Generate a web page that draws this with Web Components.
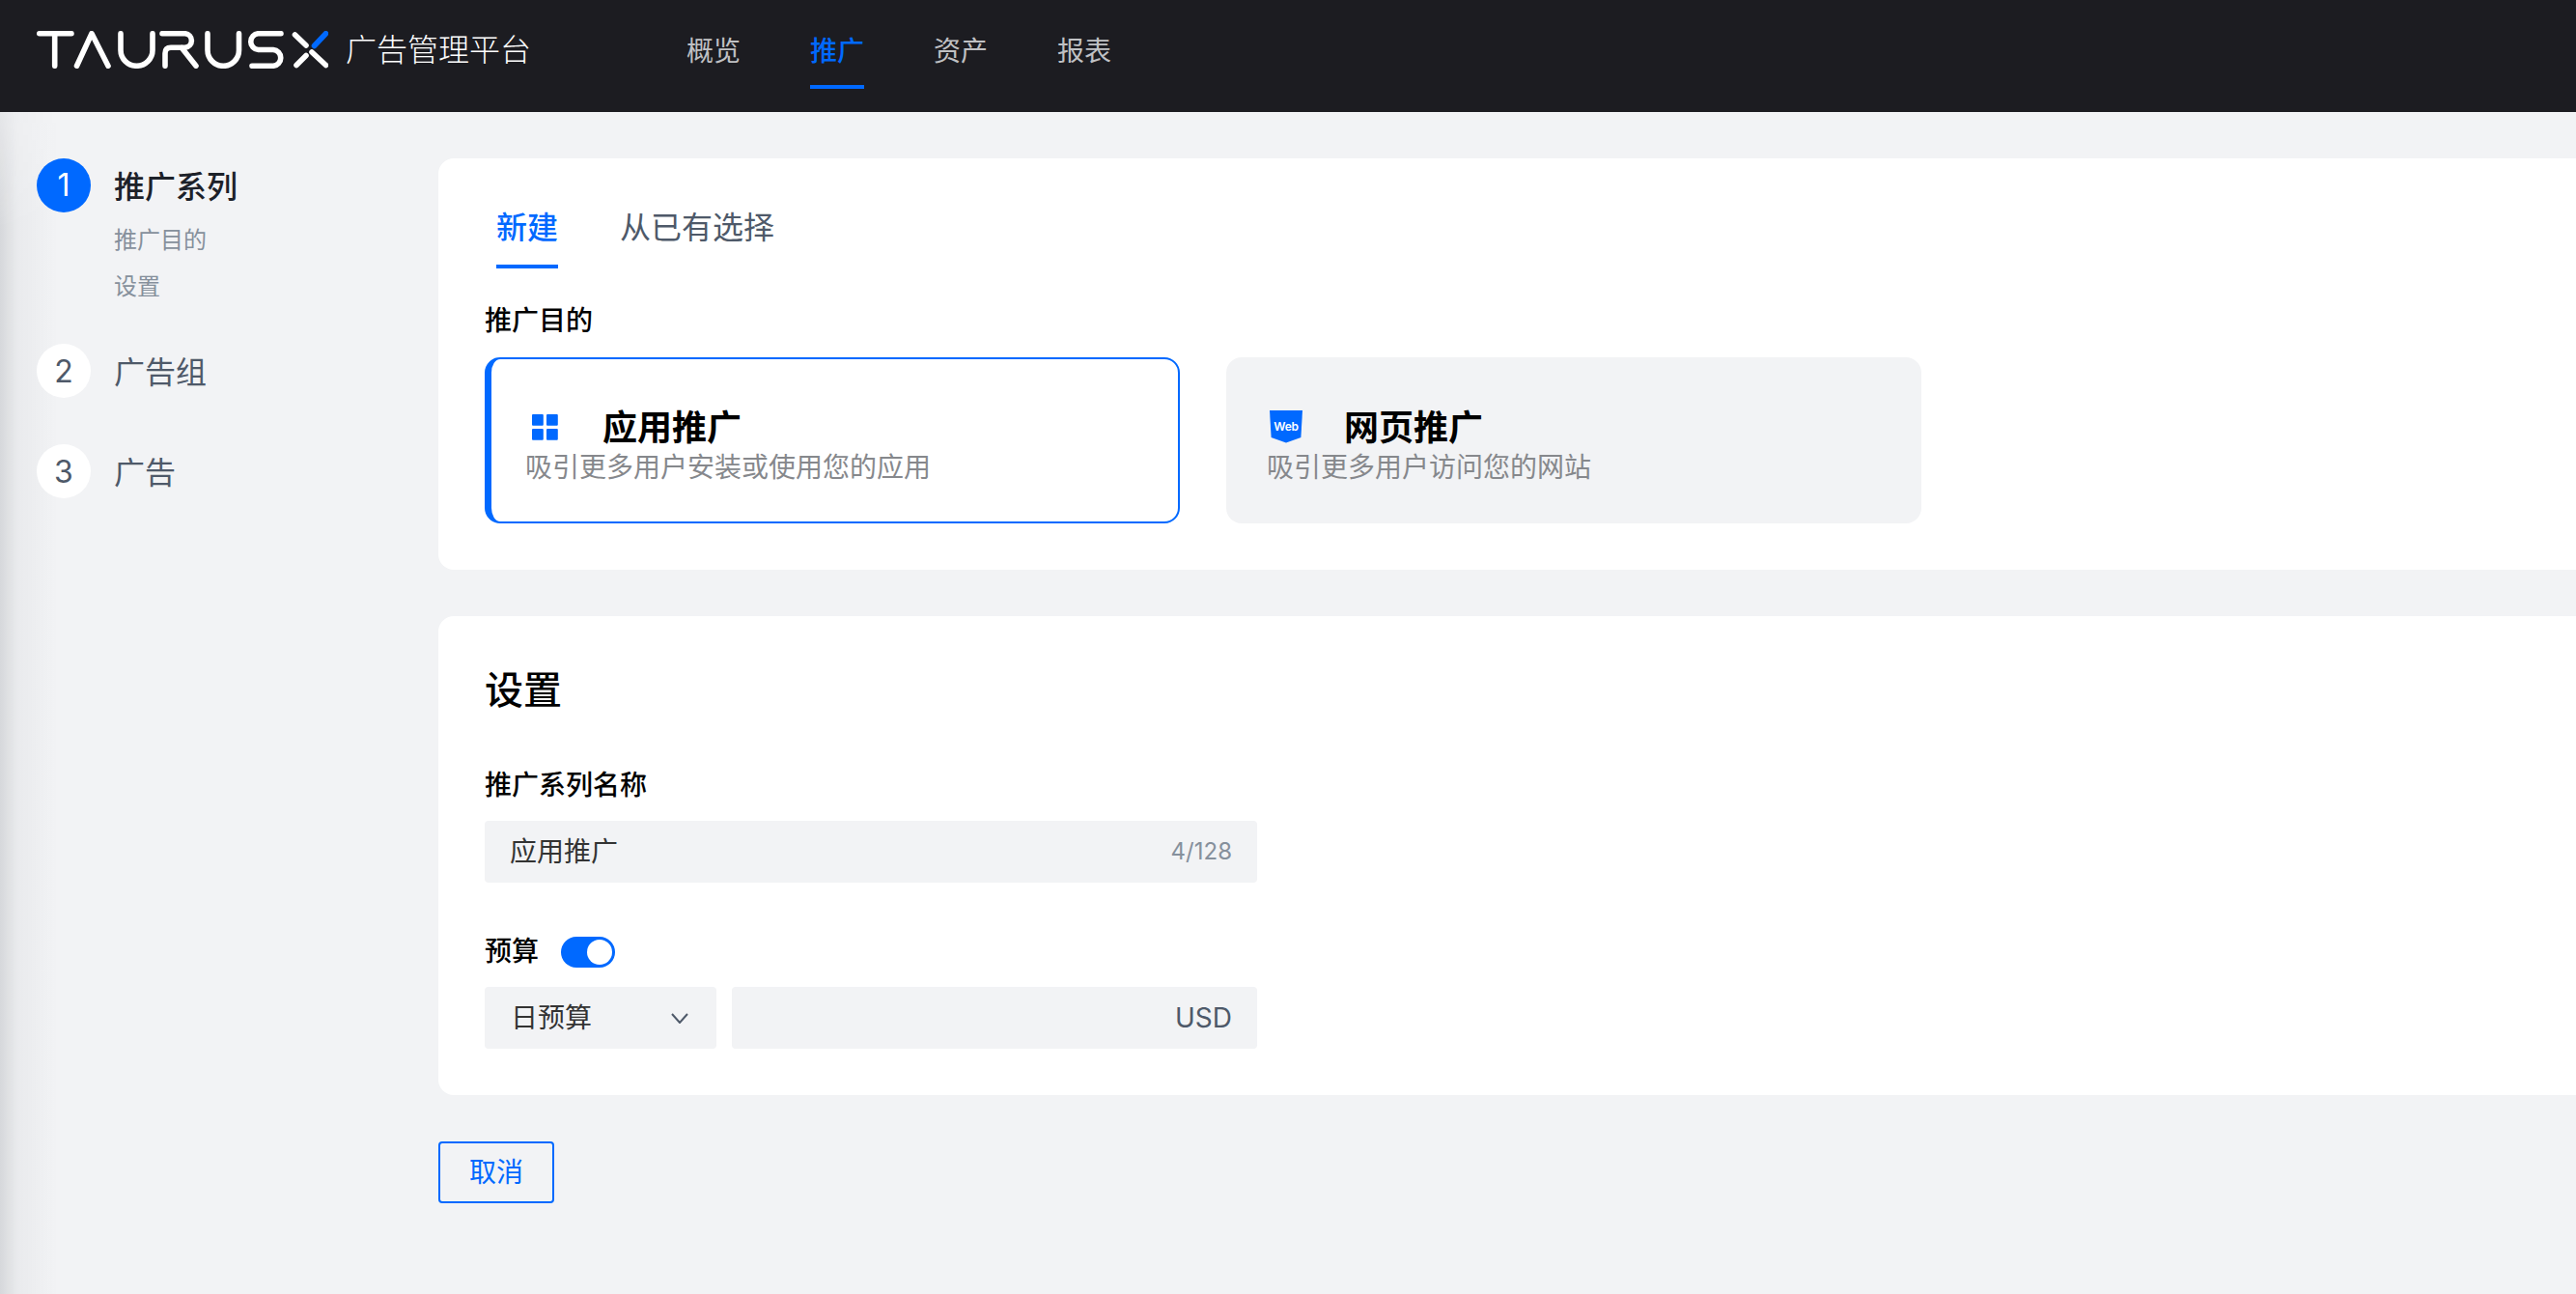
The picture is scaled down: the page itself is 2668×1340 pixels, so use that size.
<!DOCTYPE html>
<html lang="zh-CN">
<head>
<meta charset="utf-8">
<title>广告管理平台</title>
<style>
  html, body { margin: 0; height: 100%; }
  body { background: #f2f3f5; overflow: hidden; font-family: Inter, "Noto Sans CJK SC", sans-serif; }
</style>
</head>
<body>
<tx-app>
  <tx-header slot="header">
    <tx-logo slot="logo"></tx-logo>
    <tx-nav-item>概览</tx-nav-item>
    <tx-nav-item active>推广</tx-nav-item>
    <tx-nav-item>资产</tx-nav-item>
    <tx-nav-item>报表</tx-nav-item>
  </tx-header>
  <tx-sidebar slot="side">
    <tx-step num="1" active>推广系列
      <span slot="sub">推广目的</span>
      <span slot="sub">设置</span>
    </tx-step>
    <tx-step num="2">广告组</tx-step>
    <tx-step num="3">广告</tx-step>
  </tx-sidebar>
  <tx-panel>
    <tx-tabs>
      <tx-tab active>新建</tx-tab>
      <tx-tab>从已有选择</tx-tab>
    </tx-tabs>
    <tx-label class="goal">推广目的</tx-label>
    <tx-cards>
      <tx-promo active heading="应用推广" desc="吸引更多用户安装或使用您的应用">
        <tx-icon-grid slot="icon"></tx-icon-grid>
      </tx-promo>
      <tx-promo heading="网页推广" desc="吸引更多用户访问您的网站">
        <tx-icon-web slot="icon"></tx-icon-web>
      </tx-promo>
    </tx-cards>
  </tx-panel>
  <tx-panel>
    <tx-title>设置</tx-title>
    <tx-label class="name">推广系列名称</tx-label>
    <tx-input value="应用推广" suffix="4/128"></tx-input>
    <tx-budget></tx-budget>
  </tx-panel>
  <tx-button>取消</tx-button>
</tx-app>

<script>
const BLUE = '#0069ff';
function def(name, css, html, setup) {
  customElements.define(name, class extends HTMLElement {
    constructor() {
      super();
      const root = this.attachShadow({ mode: 'open' });
      const t = document.createElement('template');
      t.innerHTML = `<style>${css}</style>${html}`;
      root.appendChild(t.content.cloneNode(true));
    }
    connectedCallback() { if (setup) setup(this, this.shadowRoot); }
  });
}

def('tx-app', `
  :host { display: grid; grid-template-columns: 454px minmax(0, 1fr); grid-template-rows: 116px auto;
          width: 100vw; height: 100vh; overflow: hidden; }
  .head { grid-column: 1 / 3; }
  .side { display: block; }
  main { display: flex; flex-direction: column; gap: 48px; align-items: stretch; padding-top: 48px; }
`, `
  <div class="head"><slot name="header"></slot></div>
  <div class="side"><slot name="side"></slot></div>
  <main><slot></slot></main>
`);

def('tx-header', `
  :host { display: flex; align-items: flex-start; height: 116px; background: #1c1c21; box-sizing: border-box; padding-left: 38px; }
  .brand { flex: none; width: 673px; }
  nav { display: flex; gap: 72px; }
`, `
  <div class="brand"><slot name="logo"></slot></div>
  <nav><slot></slot></nav>
`);

def('tx-logo', `
  :host { display: flex; align-items: flex-start; padding-top: 32px; }
  svg { display: block; flex: none; }
  span { margin-left: 18px; font: 300 32px/40px Inter, "Noto Sans CJK SC", sans-serif; color: #fff; }
`, `
  <svg width="302" height="39" viewBox="0 0 302 39" role="img" aria-label="TaurusX" fill="none" stroke="#fff" stroke-width="5.6" stroke-linecap="round" stroke-linejoin="round">
    <path d="M2.75 2.75H36M18.7 2.75V36.25"/>
    <path d="M41.5 36.25L57 2.75L74 36.25"/>
    <path d="M87 2.75V20A16.5 16.25 0 0 0 120 20V2.75"/>
    <path d="M130 2.75H153.7A7.3 7.3 0 0 1 153.7 17.3H139Q133 17.3 133 23.3V36.25M150 17.3L165 36.25"/>
    <path d="M177 2.75V20A16.2 16.25 0 0 0 209.5 20V2.75"/>
    <path d="M253 2.75H229.5A8.4 8.4 0 0 0 229.5 19.5H245A8.4 8.4 0 0 1 245 36.25H223"/>
    <path d="M267.5 4L279 15M269 35.5L279 25.5M285 22L299.5 35.5"/>
    <path d="M287.5 15.5L299.5 2.75" stroke="${BLUE}"/>
  </svg>
  <span>广告管理平台</span>
`);

def('tx-nav-item', `
  :host { display: block; box-sizing: border-box; height: 92px; padding-top: 33px;
          font: 400 28px/40px Inter, "Noto Sans CJK SC", sans-serif; color: #c0c1c4; border-bottom: 4px solid transparent; }
  :host([active]) { color: ${BLUE}; border-bottom-color: ${BLUE}; font-weight: 500; }
`, `<slot></slot>`);

def('tx-sidebar', `
  :host { display: block; position: relative; box-sizing: border-box; height: 100%; padding: 48px 0 0 38px; }
  .edge { position: absolute; left: 0; top: 0; bottom: 0; width: 60px;
          background: linear-gradient(90deg, rgba(30,35,45,.13), rgba(30,35,45,.04) 18px, rgba(30,35,45,0) 60px);
          -webkit-mask-image: linear-gradient(to bottom, rgba(0,0,0,.45), #000 120px); mask-image: linear-gradient(to bottom, rgba(0,0,0,.45), #000 120px); }
  .list { position: relative; }
`, `<div class="edge"></div><div class="list"><slot></slot></div>`);

def('tx-step', `
  :host { display: grid; grid-template-columns: 56px auto; column-gap: 24px; margin-bottom: 48px; }
  :host([active]) { margin-bottom: 35px; }
  .dot { box-sizing: border-box; width: 56px; height: 56px; border-radius: 50%; background: #fff; color: #4e5969; padding-top: 2px;
         display: flex; align-items: center; justify-content: center; font: 400 32px/54px Inter, sans-serif; }
  .label { box-sizing: border-box; height: 56px; padding-top: 2px; font: 400 32px/56px Inter, "Noto Sans CJK SC", sans-serif; color: #4e5969; }
  :host([active]) .dot { background: ${BLUE}; color: #fff; padding-top: 0; }
  :host([active]) .label { color: #1d2129; font-weight: 500; }
  .sub { grid-column: 2; padding-top: 5px; display: none; }
  :host([active]) .sub { display: block; }
  ::slotted([slot=sub]) { display: block; font: 400 24px/48px Inter, "Noto Sans CJK SC", sans-serif; color: #86909c; }
`, `
  <div class="dot" id="n"></div>
  <div class="label"><slot></slot></div>
  <div class="sub"><slot name="sub"></slot></div>
`, (el, r) => { r.getElementById('n').textContent = el.getAttribute('num'); });

def('tx-panel', `
  :host { display: block; box-sizing: border-box; background: #fff; border-radius: 16px 0 0 16px; padding: 49px 0 48px 48px; }
`, `<slot></slot>`);

def('tx-tabs', `
  :host { display: flex; gap: 64px; padding-left: 12px; }
`, `<slot></slot>`);

def('tx-tab', `
  :host { display: block; box-sizing: border-box; height: 65px; padding-top: 1px; font: 400 32px/44px Inter, "Noto Sans CJK SC", sans-serif;
          color: #4e5969; border-bottom: 4px solid transparent; }
  :host([active]) { color: ${BLUE}; border-bottom-color: ${BLUE}; font-weight: 500; }
`, `<slot></slot>`);

def('tx-label', `
  :host { display: block; font: 500 28px/40px Inter, "Noto Sans CJK SC", sans-serif; color: #000; }
  :host(.goal) { margin: 34px 0 18px; }
  :host(.name) { margin: 50px 0 17px; }
`, `<slot></slot>`);

def('tx-title', `
  :host { display: block; box-sizing: border-box; height: 56px; font: 500 40px/56px Inter, "Noto Sans CJK SC", sans-serif; color: #000; }
`, `<slot></slot>`);

def('tx-cards', `:host { display: flex; gap: 48px; }`, `<slot></slot>`);

def('tx-promo', `
  :host { display: block; box-sizing: border-box; width: 720px; height: 172px; border-radius: 16px;
          background: #f2f3f5; border: 2px solid transparent; border-left-width: 7px; padding: 48px 0 0 35px; }
  :host([active]) { background: #fff; border-color: ${BLUE}; }
  .row { display: flex; align-items: center; height: 44px; }
  .ico { flex: none; width: 80px; display: flex; align-items: center; }
  h3 { box-sizing: border-box; height: 44px; padding-top: 1px; margin: 0; font: 600 36px/44px Inter, "Noto Sans CJK SC", sans-serif; color: #000; }
  p { margin: 0; font: 400 28px/40px Inter, "Noto Sans CJK SC", sans-serif; color: #86888c; }
`, `
  <div class="row"><div class="ico"><slot name="icon"></slot></div><h3 id="h"></h3></div>
  <p id="d"></p>
`, (el, r) => {
  r.getElementById('h').textContent = el.getAttribute('heading');
  r.getElementById('d').textContent = el.getAttribute('desc');
});

def('tx-icon-grid', `
  :host { display: block; margin-left: 7px; line-height: 0; }
`, `
  <svg width="27" height="27" viewBox="0 0 27 27" fill="${BLUE}" aria-hidden="true">
    <rect width="11.8" height="11.8" rx="1"/><rect x="15" width="11.8" height="11.8" rx="1"/>
    <rect y="15" width="11.8" height="11.8" rx="1"/><rect x="15" y="15" width="11.8" height="11.8" rx="1"/>
  </svg>
`);

def('tx-icon-web', `
  :host { display: block; margin-left: 3px; line-height: 0; }
  text { font: 600 12px Inter, "Liberation Sans", sans-serif; fill: #fff; letter-spacing: -.3px; }
`, `
  <svg width="34" height="34" viewBox="0 0 34 34">
    <path d="M0 0H34L32.4 28L17 33.6L1.6 28Z" fill="${BLUE}"/>
    <text x="17" y="20.5" text-anchor="middle">Web</text>
  </svg>
`);

def('tx-input', `
  :host { display: flex; align-items: center; justify-content: space-between; box-sizing: border-box; width: 800px; height: 64px;
          background: #f2f3f5; border-radius: 4px; padding: 0 26px; }
  .v { font: 400 28px/40px Inter, "Noto Sans CJK SC", sans-serif; color: #333; }
  .s { font: 400 24px/40px Inter, sans-serif; color: #86909c; }
`, `<span class="v" id="v"></span><span class="s" id="s"></span>`, (el, r) => {
  r.getElementById('v').textContent = el.getAttribute('value');
  r.getElementById('s').textContent = el.getAttribute('suffix');
});

def('tx-toggle', `
  :host { display: flex; justify-content: flex-end; align-items: center; box-sizing: border-box; width: 56px; height: 32px; padding-right: 3px; background: ${BLUE}; border-radius: 16px; }
  i { display: block; width: 26px; height: 26px; border-radius: 50%; background: #fff; }
`, `<i></i>`);

def('tx-select', `
  :host { display: flex; align-items: center; justify-content: space-between; box-sizing: border-box; width: 240px; height: 64px;
          background: #f2f3f5; border-radius: 4px; padding: 0 29px 0 27px; font: 400 28px/40px Inter, "Noto Sans CJK SC", sans-serif; color: #333; }
  svg { display: block; }
`, `
  <span><slot></slot></span>
  <svg width="18" height="11" viewBox="0 0 18 11" fill="none" stroke="#4e5969" stroke-width="2" aria-hidden="true"><path d="M1 1L9 10L17 1"/></svg>
`);

def('tx-amount', `
  :host { display: flex; align-items: center; justify-content: flex-end; box-sizing: border-box; flex: 1; height: 64px;
          background: #f2f3f5; border-radius: 4px; padding: 0 26px; font: 400 28px/40px Inter, sans-serif; color: #4e5969; }
`, `<slot></slot>`);

def('tx-budget', `
  :host { display: block; width: 800px; margin-top: 56px; }
  .top { display: flex; align-items: flex-start; gap: 23px; font: 500 28px/30px Inter, "Noto Sans CJK SC", sans-serif; color: #000; }
  .ctl { display: flex; gap: 16px; margin-top: 20px; }
`, `
  <div class="top"><span>预算</span><tx-toggle></tx-toggle></div>
  <div class="ctl"><tx-select>日预算</tx-select><tx-amount>USD</tx-amount></div>
`);

def('tx-button', `
  :host { display: flex; align-items: center; justify-content: center; box-sizing: border-box; width: 120px; height: 64px;
          border: 2px solid ${BLUE}; border-radius: 4px; font: 400 28px/40px Inter, "Noto Sans CJK SC", sans-serif; color: ${BLUE}; }
`, `<slot></slot>`);
</script>
</body>
</html>
